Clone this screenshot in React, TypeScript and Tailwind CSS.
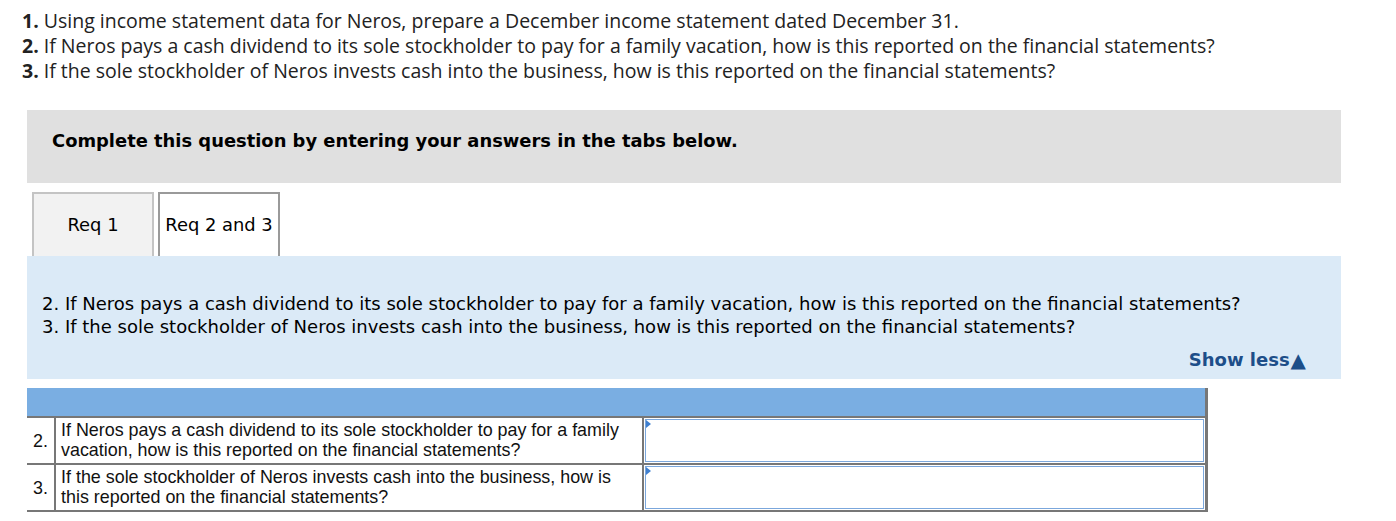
import React from 'react';

const questions = [
  { n: '2.', text: 'If Neros pays a cash dividend to its sole stockholder to pay for a family vacation, how is this reported on the financial statements?' },
  { n: '3.', text: 'If the sole stockholder of Neros invests cash into the business, how is this reported on the financial statements?' },
];

function AnswerBox() {
  return (
    <div className="relative h-full w-full border border-[#7ba7dc] bg-white">
      <span className="absolute left-0 top-0 h-0 w-0 border-y-[4px] border-l-[5px] border-y-transparent border-l-[#3f7fcf]" />
    </div>
  );
}

export default function App() {
  return (
    <div className="min-h-[521px] bg-white pt-[8px] text-black">
      <div className="pl-[22px] font-['Open_Sans',sans-serif] text-[19.5px] leading-[25px] text-[#222]">
        <p><b>1.</b> Using income statement data for Neros, prepare a December income statement dated December 31.</p>
        <p><b>2.</b> If Neros pays a cash dividend to its sole stockholder to pay for a family vacation, how is this reported on the financial statements?</p>
        <p><b>3.</b> If the sole stockholder of Neros invests cash into the business, how is this reported on the financial statements?</p>
      </div>

      <div className="mx-[27px] mt-[27px] w-[1314px] font-['DejaVu_Sans',Verdana,sans-serif]">
        <div className="h-[73px] bg-[#e0e0e0] pl-[25px] pt-[20px] text-[17.9px] font-bold leading-[22px]">
          Complete this question by entering your answers in the tabs below.
        </div>

        <div className="mt-[9px] flex gap-[4px] pl-[5px]">
          <div className="flex h-[64px] w-[122px] items-center justify-center border-2 border-b-0 border-[#c4c4c4] bg-[#f2f2f2] text-[17.9px]">
            Req 1
          </div>
          <div className="flex h-[64px] w-[122px] items-center justify-center border-2 border-b-0 border-[#9a9a9a] bg-white text-[17.9px]">
            Req 2 and 3
          </div>
        </div>

        <div className="h-[123px] bg-[#dbeaf7] px-[15px] pt-[36px] text-[18px] leading-[23px]">
          <p>2. If Neros pays a cash dividend to its sole stockholder to pay for a family vacation, how is this reported on the financial statements?</p>
          <p>3. If the sole stockholder of Neros invests cash into the business, how is this reported on the financial statements?</p>
          <div className="mt-[11px] flex items-center justify-end pr-[20px] text-[18px] font-bold leading-[22px] text-[#1d4e89]">
            Show less<span className="ml-[1px] text-[20px] leading-[20px]">▲</span>
          </div>
        </div>

        <div className="mt-[9px] w-[1181px] border-r-[3px] border-[#777] font-['Liberation_Sans',Arial,sans-serif] text-[17.9px] leading-[20px] text-[#111]">
          <div className="h-[30px] border-b-2 border-[#777] bg-[#7aaee2]" />
          {questions.map((q) => (
            <div key={q.n} className="flex h-[47px] border-b-2 border-[#777]">
              <div className="flex w-[29px] shrink-0 items-center justify-center border-r-2 border-[#777]">{q.n}</div>
              <div className="w-[588px] shrink-0 border-r-2 border-[#777] px-[5px] pt-[2px]">{q.text}</div>
              <div className="flex-1 p-[1px]">
                <AnswerBox />
              </div>
            </div>
          ))}
        </div>
      </div>
    </div>
  );
}
